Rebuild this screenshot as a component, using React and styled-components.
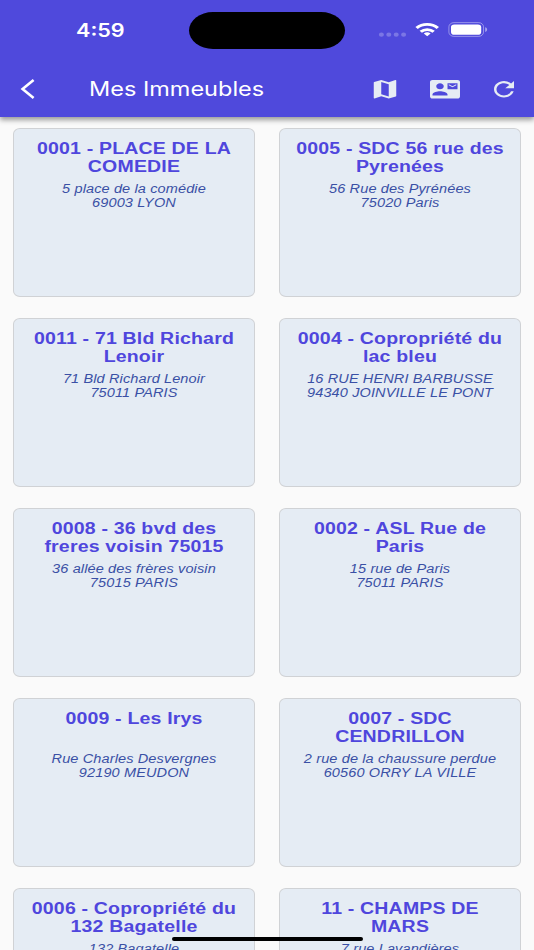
import React from "react";
import styled, { createGlobalStyle } from "styled-components";
import { MdContactMail, MdMap, MdRefresh } from "react-icons/md";

const GlobalStyle = createGlobalStyle`
  * {
    box-sizing: border-box;
  }
  body {
    margin: 0;
    background: #fafafa;
    overflow: hidden;
  }
`;

const Screen = styled.div`
  position: relative;
  width: 534px;
  height: 950px;
  overflow: hidden;
  background: #fafafa;
  font-family: "Liberation Sans", Arial, sans-serif;
`;

const Header = styled.header`
  position: relative;
  z-index: 1;
  height: 117px;
  background: #4f49dc;
  box-shadow: 0 3px 5px rgba(0, 0, 0, 0.38);
  color: #fff;
`;

const StatusBar = styled.div`
  height: 60px;
  padding: 0 46px 0 76px;
  display: flex;
  align-items: center;
`;

const Stretched = styled.span`
  display: block;
  white-space: nowrap;
  transform: scaleX(${(props) => props.$x});
  transform-origin: ${(props) => props.$origin || "left"} center;
`;

const Clock = styled.div`
  width: 113px;
  padding-top: 2px;
  font: 600 18px/22px Inter, sans-serif;
`;

const Island = styled.div`
  width: 156px;
  height: 37px;
  border-radius: 24px / 18.5px;
  background: #000;
`;

const StatusIcons = styled.svg`
  display: block;
  margin-left: 31px;
  width: 112px;
  height: 24px;
  flex: none;
`;

const Toolbar = styled.div`
  height: 57px;
  padding: 1px 15px 0 20px;
  display: flex;
  align-items: center;
`;

const BackIcon = styled.svg`
  width: 16px;
  height: 22px;
  display: block;
`;

const PageTitle = styled.h1`
  margin: 0 0 0 53px;
  flex: 1;
  font: 400 20px/24px Inter, sans-serif;
`;

const Actions = styled.div`
  display: flex;
  gap: 29.5px;
  color: #e6ecf4;
  svg {
    display: block;
    width: 30px;
    height: 24.5px;
  }
`;

const Grid = styled.main`
  padding: 11px 13px 0;
  display: grid;
  grid-template-columns: 242px 242px;
  grid-auto-rows: 169px;
  gap: 21px 24px;
`;

const Card = styled.article`
  padding-top: 11px;
  border: 1px solid #d0d2d5;
  border-radius: 7px / 6px;
  background: #e5ecf4;
  text-align: center;
`;

const Name = styled.h2`
  margin: 0;
  height: 42px;
  font-size: 16px;
  line-height: 18.4px;
  font-weight: 700;
  letter-spacing: 0.15px;
  color: #4f46dd;
`;

const Address = styled.p`
  margin: 0;
  font-size: 12px;
  line-height: 14.1px;
  font-style: italic;
  letter-spacing: 0.1px;
  color: #3a50a5;
`;

const HomeIndicator = styled.div`
  position: absolute;
  z-index: 2;
  left: 171.5px;
  bottom: 9px;
  width: 191px;
  height: 4.5px;
  border-radius: 3px;
  background: #000;
`;

const buildings = [
  {
    name: ["0001 - PLACE DE LA", "COMEDIE"],
    address: ["5 place de la comédie", "69003 LYON"],
  },
  {
    name: ["0005 - SDC 56 rue des", "Pyrenées"],
    address: ["56 Rue des Pyrénées", "75020 Paris"],
  },
  {
    name: ["0011 - 71 Bld Richard", "Lenoir"],
    address: ["71 Bld Richard Lenoir", "75011 PARIS"],
  },
  {
    name: ["0004 - Copropriété du", "lac bleu"],
    address: ["16 RUE HENRI BARBUSSE", "94340 JOINVILLE LE PONT"],
  },
  {
    name: ["0008 - 36 bvd des", "freres voisin 75015"],
    address: ["36 allée des frères voisin", "75015 PARIS"],
  },
  {
    name: ["0002 - ASL Rue de", "Paris"],
    address: ["15 rue de Paris", "75011 PARIS"],
  },
  {
    name: ["0009 - Les Irys"],
    address: ["Rue Charles Desvergnes", "92190 MEUDON"],
  },
  {
    name: ["0007 - SDC", "CENDRILLON"],
    address: ["2 rue de la chaussure perdue", "60560 ORRY LA VILLE"],
  },
  {
    name: ["0006 - Copropriété du", "132 Bagatelle"],
    address: ["132 Bagatelle"],
  },
  {
    name: ["11 - CHAMPS DE", "MARS"],
    address: ["7 rue Lavandières"],
  },
];

function Lines({ lines, stretch }) {
  return lines.map((line) => (
    <Stretched key={line} $x={stretch} $origin="center">
      {line}
    </Stretched>
  ));
}

function BuildingCard({ building }) {
  return (
    <Card>
      <Name>
        <Lines lines={building.name} stretch={1.219} />
      </Name>
      <Address>
        <Lines lines={building.address} stretch={1.21} />
      </Address>
    </Card>
  );
}

export default function App() {
  return (
    <Screen>
      <GlobalStyle />
      <Header>
        <StatusBar>
          <Clock>
            <Stretched $x={1.2}>4:59</Stretched>
          </Clock>
          <Island />
          <StatusIcons viewBox="376 18 112 24" fill="none">
            <g fill="#fff" fillOpacity="0.25">
              <ellipse cx="381.4" cy="34.7" rx="2.5" ry="2.1" />
              <ellipse cx="388.8" cy="34.7" rx="2.5" ry="2.1" />
              <ellipse cx="396.2" cy="34.7" rx="2.5" ry="2.1" />
              <ellipse cx="403.6" cy="34.7" rx="2.5" ry="2.1" />
            </g>
            <g
              transform="translate(427.2 36.6) scale(1.22 1)"
              stroke="#fff"
              strokeWidth="2.8"
            >
              <path d="M-8.7 -8.7a12.6 12.6 0 0 1 17.4 0" />
              <path d="M-5.3 -4.9a7.7 7.7 0 0 1 10.6 0" />
              <path d="M0 -0.3L-2.8 -3.1a4.1 4.1 0 0 1 5.6 0z" fill="#fff" stroke="none" />
            </g>
            <rect
              x="448.9"
              y="22.6"
              width="34.6"
              height="13.8"
              rx="5"
              ry="4.2"
              stroke="#fff"
              strokeOpacity="0.4"
            />
            <rect x="451" y="24.5" width="30.2" height="10.2" rx="3.3" ry="2.8" fill="#fff" />
            <path d="M485.2 27.3c2.6.7 2.6 3.9 0 4.7z" fill="#fff" fillOpacity="0.5" />
          </StatusIcons>
        </StatusBar>
        <Toolbar>
          <BackIcon viewBox="0 0 16 22" fill="none">
            <path d="M13.6 2L2.6 11l11 9" stroke="#fff" strokeWidth="2.6" />
          </BackIcon>
          <PageTitle>
            <Stretched $x={1.175}>Mes Immeubles</Stretched>
          </PageTitle>
          <Actions>
            <MdMap preserveAspectRatio="none" />
            <MdContactMail preserveAspectRatio="none" />
            <MdRefresh preserveAspectRatio="none" />
          </Actions>
        </Toolbar>
      </Header>
      <Grid>
        {buildings.map((building) => (
          <BuildingCard key={building.name[0]} building={building} />
        ))}
      </Grid>
      <HomeIndicator />
    </Screen>
  );
}
